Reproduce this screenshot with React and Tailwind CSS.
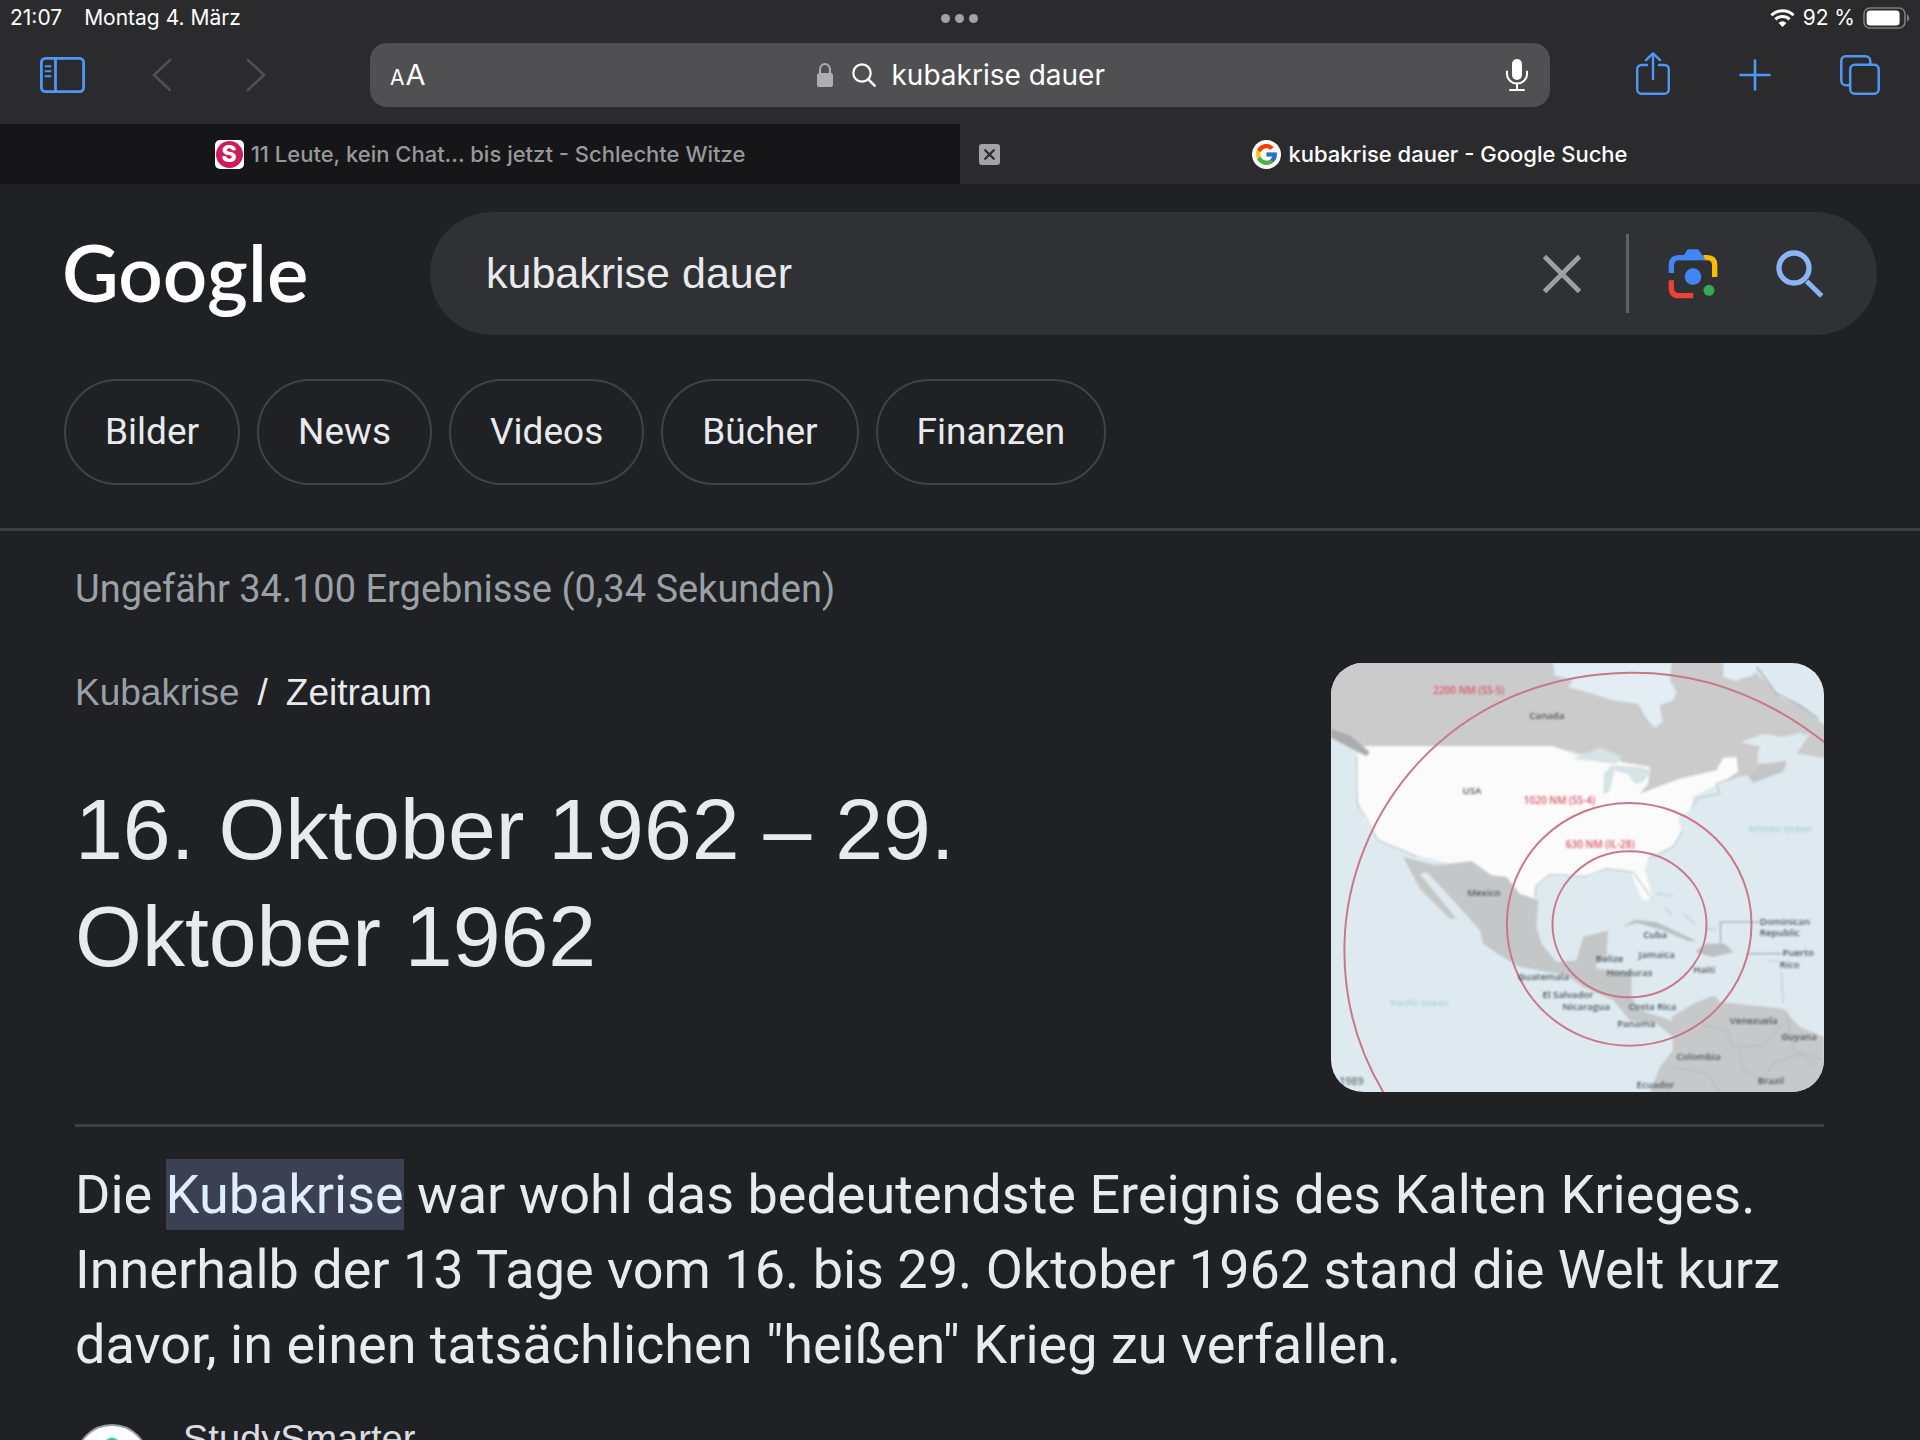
import { FcGoogle } from "react-icons/fc";

const CHIPS = ["Bilder", "News", "Videos", "Bücher", "Finanzen"];

function SidebarIcon() {
  return (
    <svg width="45" height="36" viewBox="0 0 45 36" fill="none" stroke="currentColor" strokeWidth="2.8" strokeLinecap="round">
      <rect x="1.4" y="1.4" width="42.2" height="33.2" rx="4" />
      <path d="M15.5 1.5V34.5" />
      <path d="M5.5 9.3h5M5.5 14.3h5M5.5 19.3h5" strokeWidth="2" />
    </svg>
  );
}

function Chevron({ flip }) {
  return (
    <svg width="20" height="34" viewBox="0 0 20 34" fill="none" stroke="currentColor" strokeWidth="2.6" strokeLinecap="round" strokeLinejoin="round">
      <path d={flip ? "M2 2L18 17L2 32" : "M18 2L2 17L18 32"} />
    </svg>
  );
}

function LockIcon() {
  return (
    <svg width="16" height="24" viewBox="0 0 16 24" className="text-[#aeaeb2]">
      <rect x="0" y="10" width="16" height="14" rx="2.6" fill="currentColor" />
      <path d="M3 11V6.5a5 5.5 0 0 1 10 0V11" fill="none" stroke="currentColor" strokeWidth="2" />
    </svg>
  );
}

function UrlSearchIcon() {
  return (
    <svg width="24" height="24" viewBox="0 0 24 24" fill="none" stroke="currentColor" strokeWidth="2.2" strokeLinecap="round">
      <circle cx="10" cy="10" r="8.7" />
      <path d="M16.4 16.4L22.6 22.6" strokeWidth="2.6" />
    </svg>
  );
}

function MicIcon() {
  return (
    <svg width="22" height="32" viewBox="0 0 22 32" fill="none" stroke="currentColor" strokeWidth="2" strokeLinecap="round">
      <rect x="6" y="0" width="10" height="21" rx="5" fill="currentColor" stroke="none" />
      <path d="M1 12.5V15a10 9.6 0 0 0 20 0v-2.5M11 25v5.5M4 31h14" />
    </svg>
  );
}

function ShareIcon() {
  return (
    <svg width="34" height="43" viewBox="0 0 34 43" fill="none" stroke="currentColor" strokeWidth="2.4" strokeLinecap="round" strokeLinejoin="round">
      <path d="M11 13H5.5A4.2 4.2 0 0 0 1.2 17.2V37.5A4.2 4.2 0 0 0 5.5 41.7H28.5A4.2 4.2 0 0 0 32.8 37.5V17.2A4.2 4.2 0 0 0 28.5 13H23" />
      <path d="M17 27V1.5M10 8.2L17 1.3L24 8.2" />
    </svg>
  );
}

function PlusIcon() {
  return (
    <svg width="32" height="32" viewBox="0 0 32 32" fill="none" stroke="currentColor" strokeWidth="2.7" strokeLinecap="round">
      <path d="M16 1.5V30.5M1.5 16H30.5" />
    </svg>
  );
}

function TabsIcon() {
  return (
    <svg width="40" height="40" viewBox="0 0 40 40" fill="none" stroke="currentColor" strokeWidth="2.5">
      <rect x="10.2" y="9.8" width="28.5" height="29" rx="4.5" />
      <path d="M9.5 30.2H5.7A4.5 4.5 0 0 1 1.3 25.7V5.7A4.5 4.5 0 0 1 5.7 1.3H25.7A4.5 4.5 0 0 1 30.2 5.7V9.5" />
    </svg>
  );
}

function WifiIcon() {
  return (
    <svg width="25" height="18" viewBox="0 0 25 18" fill="none" stroke="currentColor" strokeWidth="3">
      <path d="M1.4 6.3A15.8 15.8 0 0 1 23.6 6.3" />
      <path d="M5.4 10.4A10.2 10.2 0 0 1 19.6 10.4" />
      <path d="M12.5 18L8.6 13.9A5.6 5.6 0 0 1 16.4 13.9Z" fill="currentColor" stroke="none" />
    </svg>
  );
}

function BatteryIcon() {
  return (
    <svg width="47" height="22" viewBox="0 0 47 22">
      <rect x="1" y="1" width="41" height="20" rx="6" fill="none" stroke="#7e7e80" strokeWidth="1.6" />
      <rect x="3.6" y="3.6" width="33" height="14.8" rx="3.5" fill="#fff" />
      <path d="M44 7.5c3 1.2 3 5.8 0 7z" fill="#7e7e80" />
    </svg>
  );
}

function LensIcon() {
  return (
    <svg width="50" height="50" viewBox="84 56 150 150" fill="none" strokeWidth="16">
      <path d="M190 82H202Q224 82 224 104V140" stroke="#fbbc04" />
      <path d="M94 128V106Q94 82 118 82H160" stroke="#4285f4" />
      <path d="M120 90V74H132L141 60Q143 57 147 57H171Q175 57 177 60L198 90Z" fill="#4285f4" />
      <path d="M94 150V172Q94 196 118 196H160" stroke="#ea4335" />
      <circle cx="159" cy="139" r="25" fill="#4285f4" />
      <circle cx="207" cy="180" r="16.5" fill="#34a853" />
    </svg>
  );
}

function BlueSearchIcon() {
  return (
    <svg width="48" height="48" viewBox="406 56 144 144" fill="none" stroke="#8ab4f8">
      <circle cx="460" cy="110" r="45" strokeWidth="16" />
      <path d="M498 150L543 194" strokeWidth="15" />
    </svg>
  );
}

function ClearIcon() {
  return (
    <svg width="40" height="40" viewBox="0 0 40 40" fill="none" stroke="#9aa0a6" strokeWidth="4.8">
      <path d="M2.5 2.5L37.5 37.5M37.5 2.5L2.5 37.5" />
    </svg>
  );
}

const COUNTRY_LABELS = [
  [628, 205, "Canada"],
  [428, 430, "USA"],
  [442, 738, "Mexico"],
  [970, 864, "Cuba"],
  [956, 924, "Jamaica"],
  [828, 936, "Belize"],
  [860, 976, "Honduras"],
  [594, 990, "Guatemala"],
  [668, 1042, "El Salvador"],
  [728, 1078, "Nicaragua"],
  [926, 1078, "Costa Rica"],
  [892, 1130, "Panama"],
  [1120, 968, "Haiti"],
  [1320, 824, "Dominican"],
  [1320, 858, "Republic"],
  [1388, 918, "Puerto"],
  [1380, 954, "Rico"],
  [1230, 1122, "Venezuela"],
  [1384, 1168, "Guyana"],
  [1070, 1228, "Colombia"],
  [950, 1312, "Ecuador"],
  [1314, 1302, "Brazil"],
];

function RangeMap() {
  return (
    <svg viewBox="33 38 1480 1287" preserveAspectRatio="xMidYMid slice" className="block h-[429px] w-full" role="img" aria-label="Karte mit Raketenreichweiten um Kuba">
      <defs>
        <filter id="soft" x="-5%" y="-5%" width="110%" height="110%">
          <feGaussianBlur stdDeviation="3" />
        </filter>
      </defs>
      <rect x="0" y="0" width="1560" height="1360" fill="#dfeaf0" />
      <g filter="url(#soft)">
        <path d="M0 0H1210V80L1250 92L1300 60L1345 100L1385 145L1440 165L1500 215L1560 260V330L1430 310L1470 250L1400 262L1330 250L1265 275L1320 290L1312 340L1400 335L1390 365L1300 398L1285 375L1180 390L1000 430L940 430L950 370L990 350L900 340L860 300L780 310L700 290H150L140 310L33 240H0Z" fill="#cbcbcc" />
        <path d="M1265 275L1320 268L1400 258L1450 245L1430 300L1400 335L1330 338L1312 310L1322 288Z" fill="#dfeaf0" />
        <path d="M1255 290L1312 285L1310 345L1290 375L1255 368Z" fill="#cbcbcc" />
        <path d="M1285 380L1320 345L1400 330L1390 360L1300 396Z" fill="#c2c6c8" />
        <path d="M700 38H1055L1050 90L1070 125L1060 150L1020 165L1028 215L1005 232L980 205L955 160L880 150L800 125L745 110L760 90L705 75Z" fill="#e2edf4" />
        <path d="M1215 38H1320L1300 75L1250 90L1215 80Z" fill="#e2edf4" />
        <path d="M1310 50L1370 130L1440 165L1495 205" fill="none" stroke="#aab8bd" strokeWidth="5" />
        <path d="M120 288H700L780 318L850 300L905 335L990 350L985 400L960 430L1080 385L1190 360L1210 322L1250 320L1255 365L1195 400L1120 440L1110 480L1075 500L1085 545L1060 585L985 625L975 660L1000 745L970 750L945 700L935 665L860 655L810 680L690 675L645 710L640 745L600 730L560 680L515 675L460 635L390 640L290 615L175 570L135 510L112 440L108 360Z" fill="#fbfbfb" />
        <path d="M850 430L852 370L875 345L960 350L995 360L970 395L945 400L925 372L885 360L868 425ZM760 325L840 292L905 318L890 340Z" fill="#d6e2e4" />
        <path d="M33 235L90 255L150 305L140 318L33 262Z" fill="#a9adae" />
        <path d="M250 620L345 645L455 632L515 675L560 680L600 730L655 750L650 830L665 880L710 935L770 930L790 860L865 840L860 915L830 935L830 955L935 965L935 1040L960 1080L1040 1105L1085 1130L1060 1160L1010 1120L930 1110L880 1050L790 1010L740 975L600 950L540 915L490 880L480 840L400 750L320 665L300 670L410 805L390 805L300 715Z" fill="#c3c7c8" />
        <path d="M1055 1100L1120 1060L1185 1035L1200 1055L1390 1075L1440 1130L1513 1160V1340H985L1020 1250L1060 1200Z" fill="#c6c8c9" />
        <path d="M1150 1125L1220 1140L1240 1190L1330 1185L1390 1120M1260 1200L1270 1260L1330 1290L1360 1240L1440 1210L1490 1250M1060 1250L1160 1270L1200 1325M1400 1080L1420 1200L1513 1230" fill="none" stroke="#b4b8ba" strokeWidth="3" />
        <path d="M905 830L945 808L1010 815L1130 872L1105 872L1030 840L950 818ZM1125 905L1160 880L1215 880L1240 905L1180 920Z" fill="#b9bfc2" />
        <path d="M1010 730L1060 735M1035 770L1055 795M1090 790L1125 820M1155 835L1190 838M1345 930L1380 935M1385 965L1390 1060" fill="none" stroke="#c2d2da" strokeWidth="5" />
        <path d="M110 320L112 460L145 515L175 570L290 618M645 740L650 705L690 672L800 678L860 655L940 665L1000 750M985 625L1060 590L1088 540M1120 470L1130 445L1200 430L1190 400L1250 380" fill="none" stroke="#bfcbd0" strokeWidth="4" />
        <path d="M1318 815H1202V880M1384 910H1282" fill="none" stroke="#8f9a9f" strokeWidth="3" />
      </g>
      <g fill="none" stroke="#c9788a" strokeWidth="6">
        <ellipse cx="929" cy="822" rx="231" ry="219" />
        <ellipse cx="928" cy="822" rx="367" ry="364" />
        <path d="M190 1325C110 1190 70 1040 74 880C82 500 380 75 930 67C1150 64 1340 140 1513 275" />
      </g>
      <g filter="url(#soft)" className="font-['Open_Sans',sans-serif]" fontWeight="600">
        <g fontSize="29" fill="#4c5458">
          {COUNTRY_LABELS.map(([x, y, name]) => (
            <text key={name} x={x} y={y}>{name}</text>
          ))}
        </g>
        <g fontSize="30" fill="#d5566a">
          <text x="340" y="130">2200 NM (SS-5)</text>
          <text x="612" y="460">1020 NM (SS-4)</text>
          <text x="738" y="592">630 NM (IL-28)</text>
        </g>
        <g fontSize="27" fill="#a9cfda">
          <text x="1285" y="546">Atlantic Ocean</text>
          <text x="212" y="1066">Pacific Ocean</text>
        </g>
        <text x="58" y="1304" fontSize="32" fill="#6c7478">1989</text>
      </g>
    </svg>
  );
}

function StatusBar() {
  return (
    <div className="grid h-9 grid-cols-3 items-center px-[10px] text-[21px] leading-6 text-white">
      <div className="flex gap-[22px]">
        <span>21:07</span>
        <span>Montag 4. März</span>
      </div>
      <button aria-label="Multitasking" className="flex justify-center gap-[5px]">
        <span className="size-[9px] rounded-full bg-[#a2a2a4]" />
        <span className="size-[9px] rounded-full bg-[#a2a2a4]" />
        <span className="size-[9px] rounded-full bg-[#a2a2a4]" />
      </button>
      <div className="flex items-center justify-end gap-2">
        <WifiIcon />
        <span>92 %</span>
        <BatteryIcon />
      </div>
    </div>
  );
}

function Toolbar() {
  return (
    <div className="flex h-[88px] items-start pt-[7px] text-[#4f97f7]">
      <div className="flex h-16 w-[370px] shrink-0 items-center pl-10">
        <button aria-label="Seitenleiste"><SidebarIcon /></button>
        <button aria-label="Zurück" className="ml-[67px] text-[#505052]"><Chevron /></button>
        <button aria-label="Vorwärts" className="ml-[74px] text-[#505052]"><Chevron flip /></button>
      </div>
      <div className="flex h-16 min-w-0 flex-1 items-center justify-between rounded-[17px] bg-[#505052] pr-[22px] pl-5 text-white">
        <button aria-label="Seiteneinstellungen" className="flex w-[60px] items-baseline gap-px">
          <span className="text-[21px]">A</span>
          <span className="text-[29px]">A</span>
        </button>
        <div className="flex items-center">
          <LockIcon />
          <span className="ml-[19px]"><UrlSearchIcon /></span>
          <input aria-label="Adresse" defaultValue="kubakrise dauer" className="ml-4 w-[222px] bg-transparent text-[28px] outline-none" />
        </div>
        <button aria-label="Diktieren" className="flex w-12 justify-end"><MicIcon /></button>
      </div>
      <div className="flex h-16 w-[370px] shrink-0 items-center justify-between pr-10 pl-[86px]">
        <button aria-label="Teilen" className="-mt-1"><ShareIcon /></button>
        <button aria-label="Neuer Tab"><PlusIcon /></button>
        <button aria-label="Tabübersicht"><TabsIcon /></button>
      </div>
    </div>
  );
}

function TabStrip() {
  return (
    <div className="grid h-[60px] grid-cols-2 text-[22px] font-medium">
      <button className="flex items-center justify-center gap-[7px] bg-[#161618] text-[#98989b]">
        <span className="flex size-[29px] items-center justify-center rounded-[5px] bg-white">
          <span className="flex size-[27px] items-center justify-center rounded-full bg-[#cb1d5c] text-[23px] leading-none font-extrabold text-white">S</span>
        </span>
        11 Leute, kein Chat... bis jetzt - Schlechte Witze
      </button>
      <div className="grid grid-cols-[40px_1fr_40px] items-center bg-[#2b2b2d] text-white">
        <button aria-label="Tab schließen" className="ml-[19px] flex size-[21px] items-center justify-center rounded-[3px] bg-[#a3a3a5]">
          <svg width="11" height="11" viewBox="0 0 11 11" stroke="#2b2b2d" strokeWidth="2.2" strokeLinecap="round">
            <path d="M1.2 1.2L9.8 9.8M9.8 1.2L1.2 9.8" />
          </svg>
        </button>
        <button className="flex items-center justify-center gap-[7px]">
          <span className="flex size-[29px] items-center justify-center rounded-full bg-white">
            <FcGoogle size={25} />
          </span>
          kubakrise dauer - Google Suche
        </button>
      </div>
    </div>
  );
}

function SearchHeader() {
  return (
    <header className="border-b-3 border-[#3c4043] pt-7 pb-[43px]">
      <div className="flex items-center pr-[43px] pl-[62px]">
        <a href="#" className="w-[368px] shrink-0 pb-1 font-['Lato',sans-serif] text-[78px] leading-[96px] font-semibold text-white">Google</a>
        <form className="flex h-[123px] min-w-0 flex-1 items-center rounded-full bg-[#303134] pr-[53px] pl-14">
          <input aria-label="Suche" defaultValue="kubakrise dauer" className="min-w-0 flex-1 bg-transparent font-['Liberation_Sans',sans-serif] text-[43px] text-[#e8eaed] outline-none" />
          <button type="button" aria-label="Löschen" className="mr-11"><ClearIcon /></button>
          <span className="mr-[39px] h-[79px] w-[3px] bg-[#5f6368]" />
          <button type="button" aria-label="Google Lens" className="mr-[58px]"><LensIcon /></button>
          <button type="button" aria-label="Suchen"><BlueSearchIcon /></button>
        </form>
      </div>
      <nav className="mt-11 flex gap-[17px] px-16">
        {CHIPS.map((chip) => (
          <a key={chip} href="#" className="rounded-full border-2 border-[#3f4347] px-[39px] py-[29px] text-[37px] leading-[44px] text-[#e8eaed]">{chip}</a>
        ))}
      </nav>
    </header>
  );
}

export default function App() {
  return (
    <div className="flex h-screen flex-col overflow-hidden bg-[#202124] font-['Inter',sans-serif]">
      <div className="shrink-0 bg-[#2b2b2d]">
        <StatusBar />
        <Toolbar />
        <TabStrip />
      </div>
      <div className="min-h-0 flex-1 overflow-hidden font-['Roboto',sans-serif] text-[#e8eaed]">
        <SearchHeader />
        <main className="pr-24 pl-[75px]">
          <p className="mt-9 text-[38px] leading-[44px] text-[#9aa0a6]">Ungefähr 34.100 Ergebnisse (0,34 Sekunden)</p>
          <section className="mt-[52px] flex justify-between gap-8 border-b-3 border-[#3c4043] pb-8 font-['Liberation_Sans',sans-serif]">
            <div className="max-w-[900px] pt-2">
              <div className="flex gap-[18px] text-[37px] leading-[44px]">
                <a href="#" className="text-[#9aa0a6]">Kubakrise</a>
                <span>/</span>
                <span>Zeitraum</span>
              </div>
              <h1 className="mt-[61px] text-[86px] leading-[107px]">16. Oktober 1962 – 29. Oktober 1962</h1>
            </div>
            <div className="w-[493px] shrink-0 overflow-hidden rounded-[32px]">
              <RangeMap />
            </div>
          </section>
          <p className="mt-[30px] text-[54px] leading-[75px]">
            Die <mark className="bg-[#3b4053] py-1 text-[#e0ecff]">Kubakrise</mark> war wohl das bedeutendste Ereignis des Kalten Krieges. Innerhalb der 13 Tage vom 16. bis 29. Oktober 1962 stand die Welt kurz davor, in einen tatsächlichen "heißen" Krieg zu verfallen.
          </p>
          <a href="#" className="mt-[35px] flex gap-[34px]">
            <span className="mt-[7px] flex size-[74px] shrink-0 justify-center rounded-full border-2 border-[#9aa0a6] bg-white pt-[9px]">
              <svg width="32" height="40" viewBox="0 0 32 40">
                <path d="M10 5Q16 0 22 5L31 30L16 38L1 30Z" fill="#2fd0a5" />
              </svg>
            </span>
            <span className="font-['Liberation_Sans',sans-serif] text-[38px] leading-[44px] text-[#dadce0]">StudySmarter</span>
          </a>
        </main>
      </div>
    </div>
  );
}
